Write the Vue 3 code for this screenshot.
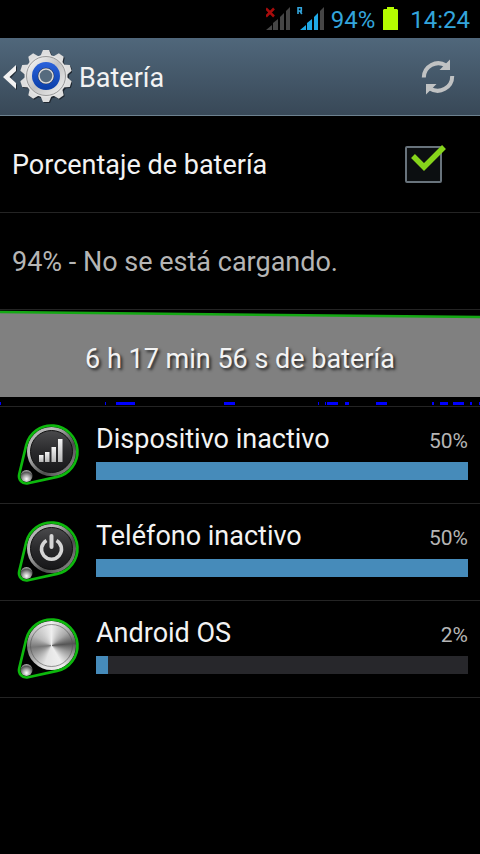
<script setup>
import { ref } from 'vue'

const showPercent = ref(true)

const usage = [
  { name: 'Dispositivo inactivo', percent: 50, bar: 100, icon: 'signal' },
  { name: 'Teléfono inactivo', percent: 50, bar: 100, icon: 'power' },
  { name: 'Android OS', percent: 2, bar: 3.2, icon: 'metal' },
]

const awake = [
  [0, 1], [105, 1], [116, 19], [224, 11], [318, 1], [325, 1], [327, 11], [345, 4],
  [376, 11], [432, 2], [440, 8], [453, 11], [470, 2], [479, 1],
]

const teeth = Array.from({ length: 10 }, (_, i) => i * 36)
</script>

<template>
  <div class="screen">
    <div class="status">
      <svg class="signal" width="25" height="24" viewBox="0 0 25 24" aria-hidden="true">
        <path d="M0 23L6 18V23ZM7 16L12 12V23H7ZM14 10L18 6V23H14ZM20 4L24 0V23H20Z" fill="#454545" />
        <path d="M0 1.500L8 9.500M8 1.500L0 9.500" stroke="#a80c0c" stroke-width="2.500" fill="none" />
      </svg>
      <svg class="signal" width="28" height="24" viewBox="0 0 28 24" aria-hidden="true">
        <path d="M3 23L9 18V23ZM10 16L15 12V23H10ZM17 10L21 6V23H17Z" fill="#1fa9e6" />
        <path d="M23 4L27 0V23H23Z" fill="#454545" />
        <path d="M1 7V.800H4.300V4H1M3 4L4.800 7" stroke="#33a5dc" stroke-width="1.600" fill="none" />
      </svg>
      <span>94%</span>
      <svg class="battery" width="16" height="24" viewBox="0 0 16 24" aria-hidden="true">
        <path d="M4 0H11V2H14L15 3V23H0V3L1 2H4Z" fill="#b5fc00" />
      </svg>
      <span>14:24</span>
    </div>

    <header class="bar">
      <button class="home" type="button" aria-label="Atrás">
        <svg width="72" height="56" viewBox="0 0 72 56" aria-hidden="true">
          <defs>
            <linearGradient id="gearBody" x1="0" y1="0" x2="1" y2="1">
              <stop offset="0" stop-color="#fff" />
              <stop offset=".5" stop-color="#c3c3c3" />
              <stop offset="1" stop-color="#f5f5f5" />
            </linearGradient>
            <linearGradient id="gearBlue" x1="0" y1="0" x2="0" y2="1">
              <stop offset="0" stop-color="#2b63dc" />
              <stop offset="1" stop-color="#0a3ea8" />
            </linearGradient>
          </defs>
          <path d="M16 16L4 28L16 40V35L10 28L16 21Z" fill="#222b34" transform="translate(1 1)" />
          <path d="M16 16L3 28L16 40V34L9.500 28L16 22Z" fill="#f2f2f2" />
          <g fill="#1f2730" transform="translate(1 1)">
            <circle cx="46" cy="27" r="22" />
            <path v-for="a in teeth" :key="a" d="M40 8L43 1H49L52 8Z" :transform="`rotate(${a} 46 27)`" />
          </g>
          <g fill="#dedede">
            <path v-for="a in teeth" :key="a" d="M40 8L43 1H49L52 8Z" :transform="`rotate(${a} 46 27)`" />
          </g>
          <circle cx="46" cy="27" r="21.500" fill="#e4e4e4" />
          <circle cx="46" cy="27" r="19.500" fill="url(#gearBody)" stroke="#999" stroke-width="1" />
          <circle cx="46" cy="27" r="14" fill="url(#gearBlue)" />
          <circle cx="46" cy="27" r="8.300" fill="#1c2a48" />
          <circle cx="46" cy="27" r="6.500" fill="#566b7e" />
          <circle cx="46" cy="27" r="7" fill="none" stroke="#dadada" stroke-width="1.600" />
        </svg>
      </button>
      <h1>Batería</h1>
      <button class="refresh" type="button" aria-label="Actualizar">
        <svg width="36" height="36" viewBox="0 0 36 36" aria-hidden="true">
          <g fill="none" stroke="#c0c2c3" stroke-width="4">
            <path d="M3.800 18.500A14.500 14.500 0 0 1 26 6.500" />
            <path d="M32.200 17A14.500 14.500 0 0 1 10 29.500" />
          </g>
          <path d="M30 .500V11H19.500ZM6 35.500V25H16.500Z" fill="#c0c2c3" />
        </svg>
      </button>
    </header>

    <main>
      <label class="row">
        <span class="text">Porcentaje de batería</span>
        <span class="check">
          <input v-model="showPercent" type="checkbox" />
          <svg v-if="showPercent" width="42" height="38" viewBox="0 0 42 38" aria-hidden="true">
            <path d="M8 11L19 22L39 2" fill="none" stroke="#86d41b" stroke-width="5.500" />
          </svg>
        </span>
      </label>

      <p class="row state"><span class="text">94% - No se está cargando.</span></p>

      <section class="chart">
        <svg viewBox="0 0 480 96" preserveAspectRatio="none" aria-hidden="true">
          <path d="M0 2L480 7V87H0Z" fill="#808080" />
          <path d="M0 2L480 7" stroke="#14a814" stroke-width="2.500" />
          <rect v-for="m in awake" :key="m[0]" :x="m[0]" y="92" :width="m[1]" height="3" fill="#00f" />
        </svg>
        <p class="text">6 h 17 min 56 s de batería</p>
      </section>

      <svg class="defs" width="0" height="0" aria-hidden="true">
        <defs>
          <linearGradient id="rim" x1="0" y1="0" x2="1" y2="1">
            <stop offset="0" stop-color="#aaa" />
            <stop offset=".3" stop-color="#bbb" />
            <stop offset=".65" stop-color="#4c4c4c" />
            <stop offset="1" stop-color="#a5a5a5" />
          </linearGradient>
          <linearGradient id="face" x1="0" y1="0" x2="0" y2="1">
            <stop offset="0" stop-color="#4a4a4c" />
            <stop offset=".5" stop-color="#2a2a2c" />
            <stop offset="1" stop-color="#171719" />
          </linearGradient>
          <linearGradient id="glyph" x1="0" y1="0" x2="0" y2="1">
            <stop offset="0" stop-color="#f4f4f4" />
            <stop offset="1" stop-color="#b4b4b4" />
          </linearGradient>
          <radialGradient id="bead" cx=".5" cy=".75" r=".75">
            <stop offset="0" stop-color="#fff" />
            <stop offset=".4" stop-color="#aaa" />
            <stop offset=".75" stop-color="#555" />
            <stop offset="1" stop-color="#bbb" />
          </radialGradient>
        </defs>
      </svg>

      <ul class="usage">
        <li v-for="item in usage" :key="item.name">
          <span class="icon">
            <span v-if="item.icon === 'metal'" class="disc"></span>
            <svg width="72" height="72" viewBox="0 0 72 72" aria-hidden="true">
              <template v-if="item.icon !== 'metal'">
                <circle cx="39.500" cy="32.500" r="24.500" fill="url(#rim)" />
                <circle cx="39.500" cy="32.500" r="21" fill="url(#face)" stroke="#111" />
              </template>
              <circle v-else cx="39.500" cy="32.500" r="21" fill="none" stroke="#555" stroke-opacity=".6" />
              <g v-if="item.icon === 'signal'" fill="url(#glyph)">
                <rect x="27" y="36" width="4.500" height="7" />
                <rect x="33" y="33" width="4.500" height="10" />
                <rect x="39.500" y="28" width="4.500" height="15" />
                <rect x="46" y="20" width="4.500" height="23" />
              </g>
              <g v-if="item.icon === 'power'" fill="none" stroke="#d6d6d6" stroke-width="3.500">
                <path d="M34.500 24.500A10 10 0 1 0 44.500 24.500" />
                <path d="M39.500 20V31" stroke-width="4" stroke-linecap="round" />
              </g>
              <circle cx="14.500" cy="57" r="6" fill="url(#bead)" />
              <path
                d="M14.200 26.300A26 26 0 1 1 45.100 57.900L16.100 64.300A7.500 7.500 0 0 1 7.200 55.200Z"
                fill="none" stroke="#0db80d" stroke-width="2.700"
              />
            </svg>
          </span>
          <div class="info">
            <div class="line">
              <span>{{ item.name }}</span>
              <span class="pct">{{ item.percent }}%</span>
            </div>
            <div class="track"><div class="fill" :style="{ width: item.bar + '%' }"></div></div>
          </div>
        </li>
      </ul>
    </main>
  </div>
</template>

<style>
body {
  background: #000;
}
</style>

<style scoped>
.screen {
  min-height: 100vh;
  background: #000;
  color: #f3f3f3;
  font-family: Roboto, "Noto Sans", sans-serif;
  font-size: 27px;
  line-height: 32px;
}
svg {
  display: block;
}
.status {
  display: flex;
  justify-content: flex-end;
  align-items: center;
  box-sizing: border-box;
  height: 38px;
  padding: 1px 10px 0 0;
  color: #33a5dc;
  font-size: 24px;
}
.signal {
  margin: 0 6px 2px 0;
}
.battery {
  margin: 0 11px 2px 8px;
}
.bar {
  display: flex;
  align-items: center;
  box-sizing: border-box;
  height: 78px;
  padding-right: 24px;
  border-bottom: 1px solid #6d818f;
  background: linear-gradient(#50677b, #384857);
}
button {
  margin: 0;
  padding: 0;
  border: 0;
  background: none;
}
.home {
  margin-right: 7px;
}
h1 {
  flex: 1;
  margin: 0;
  padding-top: 2px;
  font-size: 27px;
  font-weight: 400;
}
.text {
  padding-top: 2px;
}
.row {
  display: flex;
  align-items: center;
  justify-content: space-between;
  box-sizing: border-box;
  height: 97px;
  margin: 0;
  padding: 0 38px 0 12px;
  border-bottom: 1px solid #242424;
}
.state {
  color: #b5b5b5;
}
.check {
  position: relative;
}
.check input {
  display: block;
  appearance: none;
  box-sizing: border-box;
  width: 37px;
  height: 37px;
  margin: 0;
  border: 2px solid #68737c;
  border-radius: 2px;
  background: #0c0f11;
}
.check svg {
  position: absolute;
  top: -1px;
  left: 0;
}
.chart {
  display: grid;
  height: 96px;
  border-bottom: 1px solid #242424;
}
.chart svg,
.chart p {
  grid-area: 1 / 1;
}
.chart svg {
  width: 100%;
  height: 96px;
}
.chart p {
  z-index: 1;
  align-self: center;
  margin: 0;
  text-align: center;
  text-shadow: 2px 2px 3px #222;
}
.defs {
  position: absolute;
}
.usage {
  margin: 0;
  padding: 0;
  list-style: none;
}
.usage li {
  display: flex;
  gap: 12px;
  padding: 12px;
  border-bottom: 1px solid #242424;
}
.icon {
  position: relative;
}
.disc {
  position: absolute;
  top: 8px;
  left: 15px;
  width: 49px;
  height: 49px;
  border-radius: 50%;
  background: conic-gradient(#eee, #aaa 50deg, #555 85deg, #999 110deg, #eee 150deg, #e4e4e4 200deg, #999 245deg, #777 265deg, #bbb 300deg, #eee);
}
.icon svg {
  position: relative;
}
.info {
  flex: 1;
  padding-top: 4px;
}
.line {
  display: flex;
  justify-content: space-between;
  align-items: baseline;
  margin-bottom: 5px;
}
.pct {
  color: #b5b5b5;
  font-size: 21px;
}
.track {
  height: 18px;
  background: #27272b;
}
.fill {
  height: 100%;
  background: #468bba;
}
</style>
